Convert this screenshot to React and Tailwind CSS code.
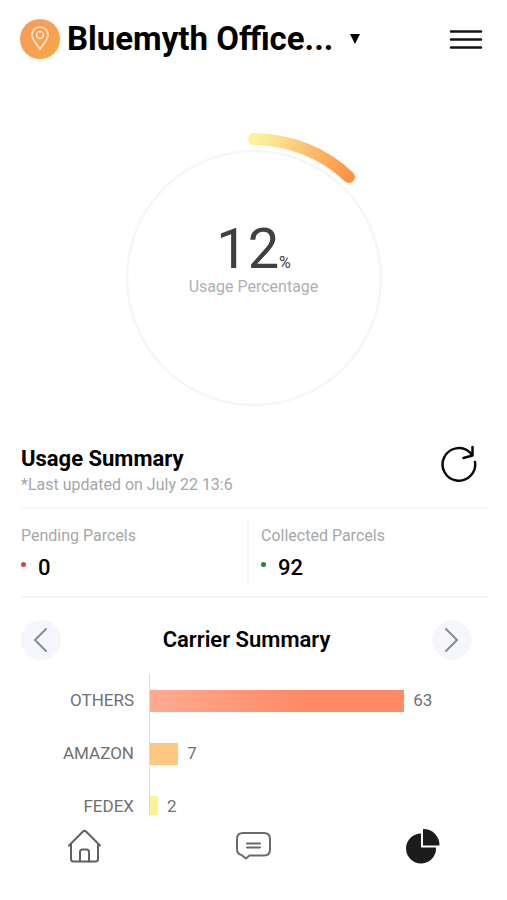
import React from "react";

const carriers = [
  { name: "OTHERS", count: 63, fill: "bg-linear-to-r from-[#ffab91] via-[#ff8a65] via-60% to-[#ff8a65]" },
  { name: "AMAZON", count: 7, fill: "bg-[#fdc87e]" },
  { name: "FEDEX", count: 2, fill: "bg-[#fdf394]" },
];

const SCALE_MAX = 84;

function Header() {
  return (
    <header className="flex h-[78px] shrink-0 items-center pl-5 pr-6">
      <div className="flex size-10 shrink-0 items-center justify-center rounded-full bg-linear-to-br from-[#f69a60] to-[#f8a740]">
        <svg viewBox="0 0 20 26" className="h-[26px] w-5" fill="none" stroke="#ffe9d2" strokeWidth="1.5" aria-hidden="true">
          <path d="M10 23.5C8 19 2 14 2 9a8 8 0 0 1 16 0c0 5-6 10-8 14.500Z" strokeLinejoin="round" />
          <circle cx="10" cy="9" r="3.500" />
        </svg>
      </div>
      <div className="ml-[7px] flex min-w-0 items-center">
        <select
          aria-label="Location"
          className="min-w-0 appearance-none bg-transparent text-[33px] leading-10 font-bold text-black"
        >
          <option>Bluemyth Office...</option>
        </select>
        <svg viewBox="0 0 10 10" className="ml-4 size-[10px] shrink-0" aria-hidden="true">
          <path d="M0 0h10L5 10Z" fill="#000" />
        </svg>
      </div>
      <button type="button" aria-label="Menu" className="ml-auto shrink-0">
        <svg viewBox="0 0 34 24" className="h-6 w-[34px]" stroke="#151515" strokeWidth="2.500" strokeLinecap="round" aria-hidden="true">
          <path d="M2 4.500h30M2 12.500h30M2 20.500h30" />
        </svg>
      </button>
    </header>
  );
}

function Gauge() {
  return (
    <section aria-label="Usage" className="mt-[49px] grid justify-center">
      <svg viewBox="0 0 302 302" className="col-start-1 row-start-1 size-[302px]" fill="none" aria-hidden="true">
        <defs>
          <linearGradient id="usage" gradientUnits="userSpaceOnUse" x1="151" y1="12" x2="246" y2="50">
            <stop offset="0" stopColor="#fbf29a" />
            <stop offset="0.2" stopColor="#fbe38e" />
            <stop offset="0.55" stopColor="#fdbd6c" />
            <stop offset="1" stopColor="#fd9344" />
          </linearGradient>
        </defs>
        <circle cx="151" cy="151" r="127" stroke="#f6f6f9" strokeWidth="2.500" />
        <path d="M151 12A139 139 0 0 1 246 50" stroke="url(#usage)" strokeWidth="12" strokeLinecap="round" />
      </svg>
      <div className="col-start-1 row-start-1 flex flex-col items-center pt-[93px]">
        <p className="flex items-baseline text-[#3f4042]">
          <span className="text-[56px] leading-[58px]">12</span>
          <span className="text-base leading-4">%</span>
        </p>
        <p className="text-base leading-[18px] text-[#b0b0b2]">Usage Percentage</p>
      </div>
    </section>
  );
}

function Stat({ label, value, dot }) {
  return (
    <div>
      <dt className="text-base leading-5 text-[#a6a7aa]">{label}</dt>
      <dd className="mt-2 flex text-[22px] leading-7 font-medium text-black">
        <span className={"mt-2 mr-3 size-[5px] rounded-full " + dot} />
        {value}
      </dd>
    </div>
  );
}

function Summary() {
  return (
    <section>
      <div className="flex items-start justify-between pt-4 pr-[11px] pb-[10px]">
        <div>
          <h2 className="text-[22px] leading-7 font-bold text-black">Usage Summary</h2>
          <p className="text-base leading-6 text-[#a6a7aa]">*Last updated on July 22 13:6</p>
        </div>
        <button type="button" aria-label="Refresh">
          <svg viewBox="0 0 38 38" className="size-[38px]" fill="none" stroke="#0a0a0a" strokeWidth="2.500" strokeLinecap="round" strokeLinejoin="round" aria-hidden="true">
            <path d="M35 17A16.300 16.300 0 1 1 30 7.500L32 10" />
            <path d="M32.500 2v8.500l-9 2.500" />
          </svg>
        </button>
      </div>
      <dl className="grid grid-cols-[228px_1fr] border-y-2 border-[#f6f6f7] py-[11px]">
        <div className="border-r-2 border-[#f6f6f7] pt-[6px] pb-[3px]">
          <Stat label="Pending Parcels" value="0" dot="bg-[#c94a4a]" />
        </div>
        <div className="pt-[6px] pb-[3px] pl-3">
          <Stat label="Collected Parcels" value="92" dot="bg-[#1f8a2b]" />
        </div>
      </dl>
    </section>
  );
}

function ArrowButton({ label, path }) {
  return (
    <button type="button" aria-label={label} className="flex size-10 items-center justify-center rounded-full bg-[#f4f6fc]">
      <svg viewBox="0 0 16 26" className="h-[26px] w-4" fill="none" stroke="#8b8b93" strokeWidth="2" strokeLinecap="round" aria-hidden="true">
        <path d={path} />
      </svg>
    </button>
  );
}

function CarrierSummary() {
  return (
    <section className="pt-[22px]">
      <div className="flex items-center justify-between pr-[17px]">
        <ArrowButton label="Previous summary" path="M13 2 2 13l11 11" />
        <h2 className="text-[22px] leading-7 font-semibold text-black">Carrier Summary</h2>
        <ArrowButton label="Next summary" path="M2 2l11 11L2 24" />
      </div>
      <ul className="mt-[14px]">
        {carriers.map((c) => (
          <li key={c.name} className="flex h-[53px] items-center text-[17px] leading-none text-[#707072]">
            <span className="w-[113px] shrink-0 text-right">{c.name}</span>
            <div className="ml-[15px] flex h-full flex-1 items-center border-l border-[#dedede]">
              <div className={"h-[22px] " + c.fill} style={{ width: (c.count / SCALE_MAX) * 100 + "%" }} />
              <span className="ml-[9px]">{c.count}</span>
            </div>
          </li>
        ))}
      </ul>
    </section>
  );
}

function BottomNav() {
  return (
    <nav className="grid h-[85px] shrink-0 grid-cols-3 bg-white pt-3 pb-[35px]">
      <a href="#home" aria-label="Home" className="flex items-center justify-center">
        <svg viewBox="0 0 36 38" className="h-[38px] w-9" fill="none" stroke="#606062" strokeWidth="2" strokeLinecap="round" strokeLinejoin="round" aria-hidden="true">
          <path d="M2 18.500 16 4.500q1.500-1.300 3 0L33 18.500" />
          <path d="M4 17v15q0 2.500 2.500 2.500h22q2.500 0 2.500-2.500V17" />
          <path d="M13 34.500V25q0-2.500 2.500-2.500h4q2.500 0 2.500 2.500v9.500" />
        </svg>
      </a>
      <a href="#messages" aria-label="Messages" className="flex items-center justify-center">
        <svg viewBox="0 0 36 38" className="h-[38px] w-9" fill="none" stroke="#6a6a6c" strokeWidth="2" strokeLinecap="round" strokeLinejoin="round" aria-hidden="true">
          <path d="M7 6h21q6 0 6 6v10.500q0 6-6 6H13.500l-3.500 3L5.500 28Q1 27 1 22V12Q1 6 7 6Z" />
          <path d="M11 16.500h13M11 20.500h13" />
        </svg>
      </a>
      <a href="#statistics" aria-label="Statistics" aria-current="page" className="flex items-center justify-center">
        <svg viewBox="0 0 36 38" className="h-[38px] w-9" fill="#1c1c1c" aria-hidden="true">
          <path d="M16 6.500V20.500H31A15 15 0 1 1 16 6.500Z" />
          <path d="M18 2A16 16 0 0 1 34.500 18.500H18Z" />
        </svg>
      </a>
    </nav>
  );
}

export default function App() {
  return (
    <div className="flex h-screen flex-col bg-white font-[Roboto,sans-serif]">
      <Header />
      <main className="min-h-0 flex-1 overflow-hidden">
        <Gauge />
        <div className="pl-[21px] pr-[18px]">
          <Summary />
          <CarrierSummary />
        </div>
      </main>
      <BottomNav />
    </div>
  );
}
